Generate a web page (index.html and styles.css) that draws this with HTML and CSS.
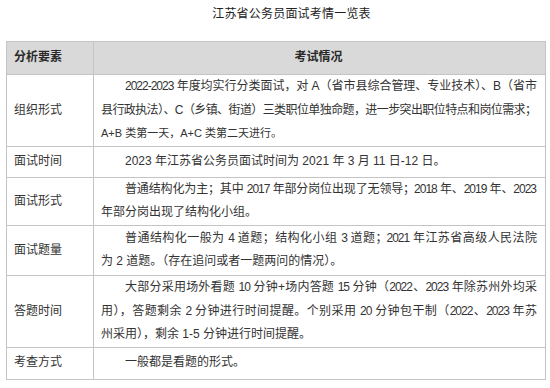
FILE: index.html
```html
<!DOCTYPE html>
<html lang="zh-CN">
<head>
<meta charset="utf-8">
<title>江苏省公务员面试考情一览表</title>
<link rel="stylesheet" href="styles.css">
</head>
<body>
<div class="page">
  <h1 class="title">江苏省公务员面试考情一览表</h1>
  <table class="grid">
    <colgroup><col class="col-label"><col></colgroup>
    <thead>
      <tr class="head">
        <th class="label">分析要素</th>
        <th class="detail center">考试情况</th>
      </tr>
    </thead>
    <tbody>
      <tr>
        <td class="label">组织形式</td>
        <td class="detail">
          <span class="ln first full">2022-2023 年度均实行分类面试，对 A（省市县综合管理、专业技术）、B（省市</span>
          <span class="ln full">县行政执法）、C（乡镇、街道）三类职位单独命题，进一步突出职位特点和岗位需求；</span>
          <span class="ln small">A+B 类第一天，A+C 类第二天进行。</span>
        </td>
      </tr>
      <tr class="one">
        <td class="label">面试时间</td>
        <td class="detail"><span class="ln first">2023 年江苏省公务员面试时间为 2021 年 3 月 11 日-12 日。</span></td>
      </tr>
      <tr>
        <td class="label">面试形式</td>
        <td class="detail">
          <span class="ln first full">普通结构化为主；其中 2017 年部分岗位出现了无领导；2018 年、2019 年、2023</span>
          <span class="ln">年部分岗出现了结构化小组。</span>
        </td>
      </tr>
      <tr class="two">
        <td class="label">面试题量</td>
        <td class="detail">
          <span class="ln first full">普通结构化一般为 4 道题；结构化小组 3 道题；2021 年江苏省高级人民法院</span>
          <span class="ln">为 2 道题。（存在追问或者一题两问的情况）。</span>
        </td>
      </tr>
      <tr>
        <td class="label">答题时间</td>
        <td class="detail">
          <span class="ln first full">大部分采用场外看题 10 分钟+场内答题 15 分钟（2022、2023 年除苏州外均采</span>
          <span class="ln full">用），答题剩余 2 分钟进行时间提醒。个别采用 20 分钟包干制（2022、2023 年苏</span>
          <span class="ln">州采用），剩余 1-5 分钟进行时间提醒。</span>
        </td>
      </tr>
      <tr class="one last">
        <td class="label">考查方式</td>
        <td class="detail"><span class="ln first">一般都是看题的形式。</span></td>
      </tr>
    </tbody>
  </table>
</div>
</body>
</html>
```

FILE: styles.css
```css
html, body {
  margin: 0;
  background: #ffffff;
}

body {
  font-family: "Liberation Sans", "Noto Sans CJK SC", sans-serif;
  color: #333333;
}

.page {
  padding: 0 5px 0 6px;
}

.title {
  margin: 0;
  height: 41px;
  box-sizing: border-box;
  padding: 0 0 0 32px;
  font-size: 12px;
  line-height: 28px;
  font-weight: normal;
  letter-spacing: 0.2px;
  text-align: center;
  color: #222222;
}

.grid {
  width: 540px;
  border-collapse: collapse;
  table-layout: fixed;
  font-size: 12px;
  line-height: 23.6px;
}

.col-label {
  width: 87px;
}

.grid th,
.grid td {
  border: 1px solid #c4c4c4;
  padding: 0 9px 0 7px;
  vertical-align: middle;
  text-align: left;
}

.head th {
  height: 32px;
  background: #d9d9d9;
  font-weight: bold;
  color: #2a2a2a;
}

.grid th.center {
  text-align: center;
}

.one td {
  height: 30px;
}

.last td {
  height: 31px;
}

.two td {
  height: 49px;
}

.ln {
  display: block;
}

.ln.first {
  text-indent: 2em;
}

.ln.full {
  letter-spacing: -1px;
  text-align: justify;
  text-align-last: justify;
}

.ln.small {
  font-size: 11px;
}
```
